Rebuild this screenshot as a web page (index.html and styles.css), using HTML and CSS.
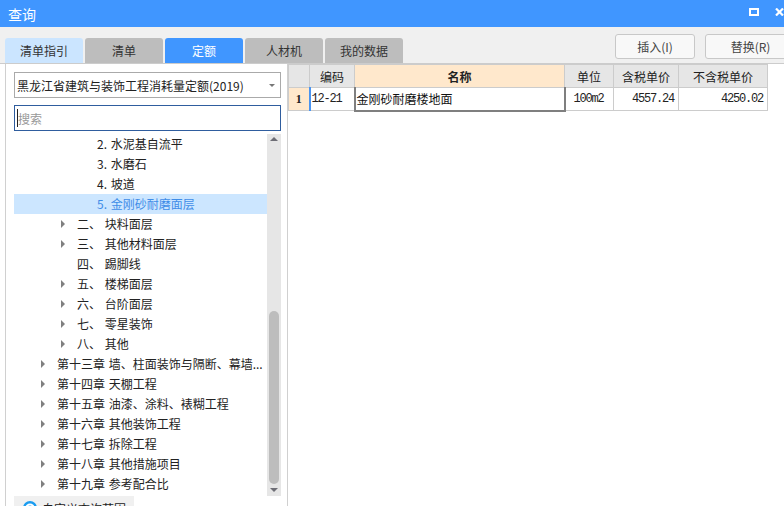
FILE: index.html
```html
<!DOCTYPE html>
<html lang="zh-CN">
<head>
  <meta charset="UTF-8">
  <title>查询</title>
  <link rel="stylesheet" href="styles.css">
</head>
<body>

<div class="title-bar">
  <span class="title">查询</span>
  <div class="win-btns">
    <svg width="10" height="8" viewBox="0 0 10 8"><rect x="1" y="1" width="8" height="6" fill="none" stroke="#fff" stroke-width="2"/></svg>
    <svg width="9" height="8" viewBox="0 0 9 8"><path d="M1 0.5L8 7.5M8 0.5L1 7.5" fill="none" stroke="#fff" stroke-width="2.2"/></svg>
  </div>
</div>

<div class="top-row">
  <div class="tabs">
    <div class="tab tab-light">清单指引</div>
    <div class="tab">清单</div>
    <div class="tab tab-active">定额</div>
    <div class="tab">人材机</div>
    <div class="tab">我的数据</div>
  </div>
  <div class="actions">
    <button class="action-btn">插入(I)</button>
    <button class="action-btn">替换(R)</button>
  </div>
</div>

<div class="content">
  <div class="left-panel">
    <div class="select-box">
      <span>黑龙江省建筑与装饰工程消耗量定额(2019)</span>
      <i class="select-arrow"></i>
    </div>
    <div class="search-box"><i class="caret"></i>搜索</div>
    <div class="tree-wrap">
      <div class="tree">
        <div class="row lv3">2. 水泥基自流平</div>
        <div class="row lv3">3. 水磨石</div>
        <div class="row lv3">4. 坡道</div>
        <div class="row lv3 selected">5. 金刚砂耐磨面层</div>
        <div class="row lv2"><i class="arrow"></i><span class="label">二、 块料面层</span></div>
        <div class="row lv2"><i class="arrow"></i><span class="label">三、 其他材料面层</span></div>
        <div class="row lv2"><i class="arrow none"></i><span class="label">四、 踢脚线</span></div>
        <div class="row lv2"><i class="arrow"></i><span class="label">五、 楼梯面层</span></div>
        <div class="row lv2"><i class="arrow"></i><span class="label">六、 台阶面层</span></div>
        <div class="row lv2"><i class="arrow"></i><span class="label">七、 零星装饰</span></div>
        <div class="row lv2"><i class="arrow"></i><span class="label">八、 其他</span></div>
        <div class="row lv1"><i class="arrow"></i><span class="label">第十三章 墙、柱面装饰与隔断、幕墙...</span></div>
        <div class="row lv1"><i class="arrow"></i><span class="label">第十四章 天棚工程</span></div>
        <div class="row lv1"><i class="arrow"></i><span class="label">第十五章 油漆、涂料、裱糊工程</span></div>
        <div class="row lv1"><i class="arrow"></i><span class="label">第十六章 其他装饰工程</span></div>
        <div class="row lv1"><i class="arrow"></i><span class="label">第十七章 拆除工程</span></div>
        <div class="row lv1"><i class="arrow"></i><span class="label">第十八章 其他措施项目</span></div>
        <div class="row lv1"><i class="arrow"></i><span class="label">第十九章 参考配合比</span></div>
      </div>
      <div class="scrollbar">
        <i class="sb-up"></i>
        <div class="sb-thumb"></div>
        <i class="sb-down"></i>
      </div>
    </div>
    <div class="custom-btn">
      <svg width="16" height="16" viewBox="0 0 16 16"><circle cx="8" cy="8" r="7" fill="#1a9cf0"/><circle cx="8" cy="8" r="4.6" fill="#fff"/><circle cx="8" cy="8" r="2.6" fill="#1a9cf0"/></svg>
      <span>自定义查询范围</span>
    </div>
  </div>

  <table class="grid">
    <colgroup>
      <col class="c-head"><col class="c-code"><col class="c-name"><col class="c-unit"><col class="c-tax"><col class="c-notax">
    </colgroup>
    <tr class="head-row">
      <th></th>
      <th>编码</th>
      <th class="name-head">名称</th>
      <th>单位</th>
      <th>含税单价</th>
      <th>不含税单价</th>
    </tr>
    <tr class="data-row">
      <td class="row-num">1</td>
      <td class="num code-cell">12-21</td>
      <td class="name-cell">金刚砂耐磨楼地面</td>
      <td class="num unit-cell">100m2</td>
      <td class="num right">4557.24</td>
      <td class="num right">4250.02</td>
    </tr>
  </table>
</div>

</body>
</html>
```

FILE: styles.css
```css
body {
  margin: 0;
  width: 784px;
  height: 506px;
  overflow: hidden;
  background: #fff;
  color: #222;
  font-family: "Noto Sans CJK SC", "Liberation Sans", sans-serif;
  font-size: 12px;
}
i { display: block; }

.title-bar {
  height: 27px;
  background: #4096ff;
  color: white;
  display: flex;
  align-items: center;
  justify-content: space-between;
  overflow: hidden;
}
.title {
  margin-left: 8px;
  font-size: 14px;
}
.win-btns {
  display: flex;
  gap: 16px;
  margin-top: -4px;
}

.top-row {
  height: 37px;
  background: #f0f0f0;
  display: flex;
  justify-content: space-between;
  box-sizing: border-box;
  border-bottom: 1px solid #ccc;
  overflow: hidden;
}
.tabs {
  display: flex;
  gap: 2px;
  margin: 11px 0 0 5px;
}
.tab {
  width: 78px;
  height: 25px;
  line-height: 25px;
  text-align: center;
  background: #bdbdbd;
  border-radius: 3px 3px 0 0;
  color: #333;
}
.tab-light { background: #cbe5ff; }
.tab-active { background: #4096ff; color: white; }

.actions {
  display: flex;
  gap: 10px;
  margin: 7px -12px 0 0;
}
.action-btn {
  width: 80px;
  height: 25px;
  padding: 0;
  background: #f8f8f8;
  border: 1px solid #c8c8c8;
  border-radius: 3px;
  color: #444;
  font-family: inherit;
  font-size: 12px;
}
.action-btn:last-child { width: 91px; }

.content {
  display: flex;
  height: 442px;
}

.left-panel {
  width: 283px;
  margin-left: 5px;
  box-sizing: border-box;
  padding: 8px 6px 0 8px;
  border-left: 1px solid #d0d0d0;
  border-right: 1px solid #d0d0d0;
  overflow: hidden;
}
.select-box {
  height: 26px;
  box-sizing: border-box;
  border: 1px solid #aaa;
  padding: 0 5px 0 2px;
  display: flex;
  align-items: center;
  justify-content: space-between;
}
.select-arrow {
  border-left: 3px solid transparent;
  border-right: 3px solid transparent;
  border-top: 3px solid #777;
}
.search-box {
  height: 26px;
  margin-top: 7px;
  box-sizing: border-box;
  border: 1px solid #2f5d9e;
  padding-left: 2px;
  display: flex;
  align-items: center;
  color: #999;
}
.caret {
  width: 1px;
  height: 18px;
  background: #222;
}

.tree-wrap {
  display: flex;
  height: 362px;
  margin-top: 3px;
}
.tree {
  width: 253px;
  flex: none;
}
.row {
  height: 20px;
  line-height: 20px;
  display: flex;
  align-items: center;
  word-spacing: 1px;
  white-space: nowrap;
}
.lv1 { padding-left: 27px; }
.lv2 { padding-left: 47px; }
.lv3 { padding-left: 83px; }
.selected {
  background: #cce6ff;
  color: #3f8de8;
}
.arrow {
  flex: none;
  width: 0;
  height: 0;
  margin-right: 12px;
  border-top: 4px solid transparent;
  border-bottom: 4px solid transparent;
  border-left: 4px solid #808080;
}
.arrow.none { border-left-color: transparent; }

.scrollbar {
  width: 14px;
  background: #e6e6e6;
  display: flex;
  flex-direction: column;
  align-items: center;
}
.sb-up {
  margin-top: 3px;
  border-left: 4px solid transparent;
  border-right: 4px solid transparent;
  border-bottom: 4px solid #6d6d75;
}
.sb-thumb {
  width: 10px;
  height: 173px;
  margin-top: auto;
  background: #bdbdbd;
  border-radius: 5px;
}
.sb-down {
  margin: 4px 0 4px;
  border-left: 4px solid transparent;
  border-right: 4px solid transparent;
  border-top: 4px solid #6d6d75;
}

.custom-btn {
  width: 120px;
  height: 24px;
  background: #f0f0f0;
  display: flex;
  align-items: center;
  gap: 4px;
  padding-left: 8px;
  box-sizing: border-box;
}

.grid {
  table-layout: fixed;
  border-collapse: collapse;
  width: 479px;
  height: 46px;
  border-left: 1px solid #ccc;
}
.c-head { width: 21px; }
.c-code { width: 45px; }
.c-name { width: 210px; }
.c-unit { width: 49px; }
.c-tax { width: 65px; }
.c-notax { width: 89px; }

.grid th, .grid td {
  border: 1px solid #ccc;
  padding: 0;
  white-space: nowrap;
}
.head-row { height: 23px; }
.data-row { height: 23px; }
.grid th {
  background: #e6e6e6;
  color: #222;
  font-weight: normal;
}
.grid .name-head {
  background: #ffe8cc;
  font-weight: bold;
}
.grid .row-num {
  background: #ffe8cc;
  font-family: "Liberation Serif", serif;
  font-weight: bold;
  text-align: center;
}
.grid .num {
  font-family: "Liberation Mono", monospace;
  letter-spacing: -1.2px;
  padding-left: 1px;
}
.grid .right {
  text-align: right;
  padding-right: 4px;
}
.grid .code-cell { border-left: 2px solid #4a94f0; }
.grid .unit-cell { padding-left: 8px; }
.grid .name-cell {
  border: 2px solid #7f7f7f;
  border-top: 1px solid #4a94f0;
  padding-left: 1px;
  color: #111;
}
```
